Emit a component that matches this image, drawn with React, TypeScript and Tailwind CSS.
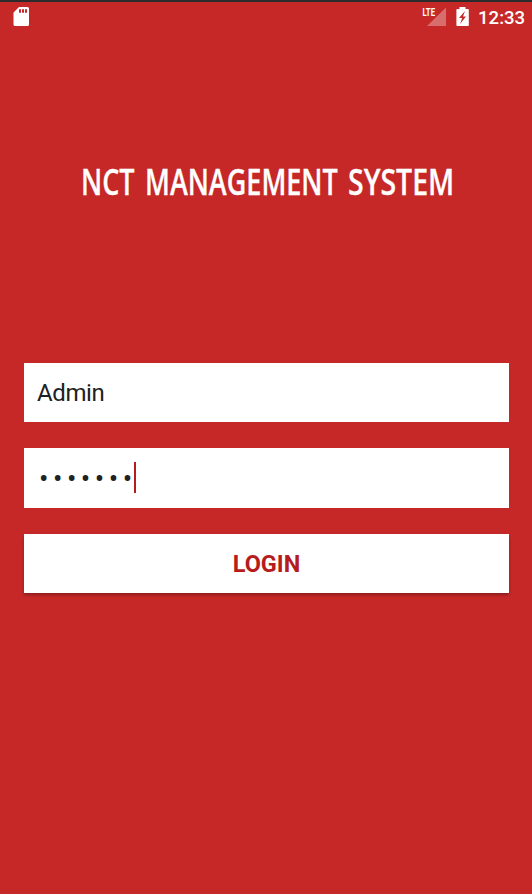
function StatusBar() {
  return (
    <header className="flex h-8 items-start justify-between pl-[13px] pr-[7px] font-[Roboto,sans-serif] text-white">
      <svg width="17" height="20" viewBox="0 0 17 20" className="mt-[5px]" aria-label="SD card">
        <path
          fill="#fff"
          fillRule="evenodd"
          d="M6 0h8.500a1.500 1.500 0 0 1 1.500 1.500v16a1.500 1.500 0 0 1-1.500 1.500H2a1.500 1.500 0 0 1-1.500-1.500V5.500zM6 2.200v3.500h2V2.200zM9 2.200v3.500h2V2.200zM12 2.200v3.500h2V2.200z"
        />
      </svg>
      <div className="flex items-start">
        <svg width="25" height="20" viewBox="0 0 25 20" className="mt-[4px]" aria-label="LTE signal">
          <path d="M24 1.500V20H5z" fill="#fff" fillOpacity=".32" />
          <text x="0.500" y="10" fontSize="11.500" fontWeight="700" fill="#fff" textLength="12.500" lengthAdjust="spacingAndGlyphs">
            LTE
          </text>
        </svg>
        <svg width="13" height="20" viewBox="0 0 13 20" className="mt-[4px] ml-[9px]" aria-label="Battery charging">
          <path
            fill="#fff"
            fillRule="evenodd"
            d="M3.500 1h6v2h2.500a.8.8 0 0 1 .8.8v15.400a.8.8 0 0 1-.8.8H1.200a.8.8 0 0 1-.8-.8V3.800A.8.8 0 0 1 1.200 3H3.500zM9 5L3 12h3.200L4 18l6-7.500H7z"
          />
        </svg>
        <span className="ml-[9px] mt-[4px] w-[47px] whitespace-nowrap text-[18.600px] leading-6 font-medium">12:33</span>
      </div>
    </header>
  );
}

export default function App() {
  return (
    <main className="flex h-[894px] w-[532px] flex-col overflow-hidden border-t-2 border-[#2c2c2c] bg-[#c62828] font-[Roboto,sans-serif]">
      <StatusBar />
      <h1 className="mt-[124px] flex h-12 whitespace-nowrap pl-[80.500px] font-['Open_Sans',sans-serif] text-[36px] leading-[48px] font-semibold text-white [-webkit-text-stroke:0.3px_white]">
        <span className="w-[64px] origin-left scale-x-[0.75]">NCT </span>
        <span className="w-[203px] origin-left scale-x-[0.75]">MANAGEMENT </span>
        <span className="w-[107px] origin-left scale-x-[0.79]">SYSTEM</span>
      </h1>
      <form className="mt-[157px] flex flex-col pr-[23px] pl-6 text-[24px] text-[#212121]">
        <div className="flex h-[59px] items-center bg-white pl-[13px] pt-px tracking-[-0.4px]">Admin</div>
        <div className="mt-[26px] flex h-[60px] items-center bg-white pl-[15px]">
          <span className="w-[95px] whitespace-nowrap pt-[2px] text-[28px] tracking-[4.500px]">•••••••</span>
          <span className="mb-[2px] h-[31px] w-[2px] bg-[#b71c1c]" />
        </div>
        <button
          type="button"
          className="mt-[26px] flex h-[59px] items-center justify-center bg-white pt-px text-[23.500px] leading-9 font-bold text-[#b71c1c] shadow-[0_2px_3px_rgba(0,0,0,0.3)]"
        >
          LOGIN
        </button>
      </form>
    </main>
  );
}
